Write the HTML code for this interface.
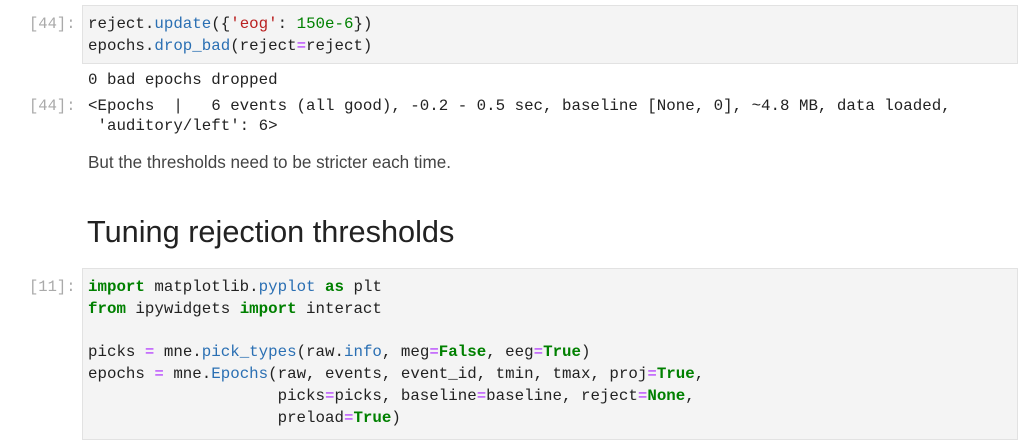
<!DOCTYPE html>
<html><head><meta charset="utf-8"><style>
body{margin:0;width:1019px;height:428px;background:#fff;position:relative;overflow:hidden;font-family:"Liberation Mono",monospace;}
.box{position:absolute;left:82px;right:1px;background:#f4f4f4;border:1px solid #e2e2e2;}
.l{position:absolute;left:88px;font-size:15.8px;white-space:pre;color:#222;line-height:20px;}
.p{position:absolute;font-size:15.5px;white-space:pre;color:#aaa;line-height:20px;left:29px}
.k{color:#008000;font-weight:bold}.o{color:#aa22ff}.b{color:#2a6fb3}.s{color:#ba2121}.n{color:#008000}
</style></head><body>
<div class="box" style="top:5px;height:57px"></div>
<div class="box" style="top:268px;height:170px"></div>
<div class="p" style="top:14px">[44]:</div>
<div class="l" style="top:14px">reject.<span class="b">update</span>({<span class="s">'eog'</span>: <span class="n">150e-6</span>})</div>
<div class="l" style="top:36px">epochs.<span class="b">drop_bad</span>(reject<span class="o">=</span>reject)</div>
<div class="l" style="top:70px">0 bad epochs dropped</div>
<div class="p" style="top:96px">[44]:</div>
<div class="l" style="top:96px">&lt;Epochs  |   6 events (all good), -0.2 - 0.5 sec, baseline [None, 0], ~4.8 MB, data loaded,
 'auditory/left': 6&gt;</div>
<div style="position:absolute;left:88px;top:153px;font-family:'Liberation Sans',sans-serif;font-size:17.1px;color:#444;">But the thresholds need to be stricter each time.</div>
<div style="position:absolute;left:87px;top:214px;font-family:'Liberation Sans',sans-serif;font-size:30.7px;color:#222;">Tuning rejection thresholds</div>
<div class="p" style="top:277px">[11]:</div>
<div class="l" style="top:277px"><span class="k">import</span> matplotlib.<span class="b">pyplot</span> <span class="k">as</span> plt</div>
<div class="l" style="top:299px"><span class="k">from</span> ipywidgets <span class="k">import</span> interact</div>
<div class="l" style="top:342px">picks <span class="o">=</span> mne.<span class="b">pick_types</span>(raw.<span class="b">info</span>, meg<span class="o">=</span><span class="k">False</span>, eeg<span class="o">=</span><span class="k">True</span>)</div>
<div class="l" style="top:364px">epochs <span class="o">=</span> mne.<span class="b">Epochs</span>(raw, events, event_id, tmin, tmax, proj<span class="o">=</span><span class="k">True</span>,</div>
<div class="l" style="top:386px">                    picks<span class="o">=</span>picks, baseline<span class="o">=</span>baseline, reject<span class="o">=</span><span class="k">None</span>,</div>
<div class="l" style="top:408px">                    preload<span class="o">=</span><span class="k">True</span>)</div>
</body></html>
